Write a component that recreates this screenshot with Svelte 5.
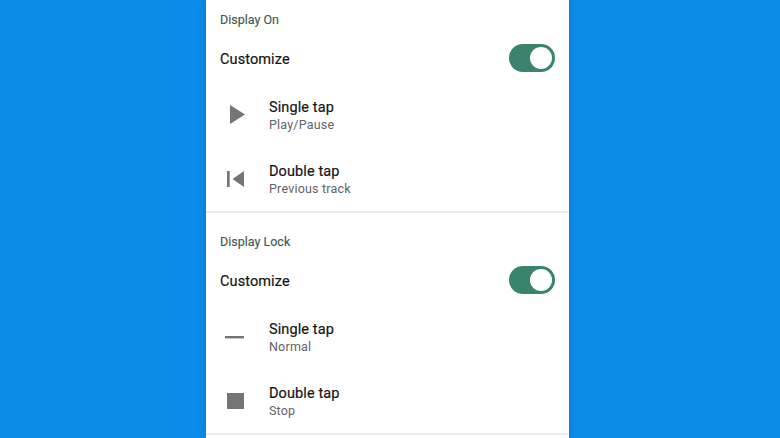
<script>
	const sections = [
		{
			title: 'Display On',
			rows: [
				{ icon: 'play', label: 'Single tap', value: 'Play/Pause' },
				{ icon: 'prev', label: 'Double tap', value: 'Previous track' }
			]
		},
		{
			title: 'Display Lock',
			rows: [
				{ icon: 'dash', label: 'Single tap', value: 'Normal' },
				{ icon: 'stop', label: 'Double tap', value: 'Stop' }
			]
		}
	];
</script>

<div class="page">
	<div class="panel">
		{#each sections as section}
			<section class="section">
				<h2 class="section-title">{section.title}</h2>

				<div class="customize">
					<span class="customize-label">Customize</span>
					<span class="toggle"><span class="thumb"></span></span>
				</div>

				<div class="rows">
					{#each section.rows as row}
						<div class="row">
							<svg class="icon" width="24" height="24" viewBox="0 0 24 24" fill="#757575">
								{#if row.icon === 'play'}
									<path d="M7 2 L22 11.5 L7 21 Z" />
								{:else if row.icon === 'prev'}
									<path d="M4 4 H6.7 V20 H4 Z M21 4 V20 L9.5 12 Z" />
								{:else if row.icon === 'dash'}
									<path d="M2 11 H21 V13.4 H2 Z" />
								{:else}
									<path d="M4 4 H21 V20 H4 Z" />
								{/if}
							</svg>
							<div class="row-text">
								<div class="row-label">{row.label}</div>
								<div class="row-value">{row.value}</div>
							</div>
						</div>
					{/each}
				</div>
			</section>
		{/each}
	</div>
</div>

<style>
	:global(body) {
		margin: 0;
		background: #0d8bea;
	}

	.page {
		height: 438px;
		overflow: hidden;
		display: flex;
		padding-left: 206px;
		font-family: Roboto, "Liberation Sans", sans-serif;
	}

	.panel {
		width: 363px;
		background: #fff;
		box-shadow: 0 0 8px rgba(0, 0, 0, 0.15);
	}

	.section {
		height: 222px;
		box-sizing: border-box;
		padding-top: 19px;
		border-bottom: 2px solid #ececec;
	}

	.section:first-child {
		height: 213px;
		padding-top: 10px;
	}

	.section-title {
		margin: 0;
		padding: 0 14px;
		font-size: 12.5px;
		line-height: 20px;
		font-weight: 400;
		color: #3f5a52;
		-webkit-text-stroke: 0.15px #3f5a52;
	}

	.customize {
		height: 38px;
		margin-top: 10px;
		padding: 0 14px;
		display: flex;
		align-items: center;
		justify-content: space-between;
		font-size: 14.5px;
		color: #161616;
	}

	.customize-label {
		padding-top: 1px;
		letter-spacing: 0.1px;
		-webkit-text-stroke: 0.2px #161616;
	}

	.toggle {
		width: 46px;
		height: 28px;
		margin-bottom: 2px;
		border-radius: 14px;
		background: #39836f;
		display: flex;
		align-items: center;
		justify-content: flex-end;
		padding-right: 3px;
		box-sizing: border-box;
	}

	.thumb {
		width: 22px;
		height: 22px;
		border-radius: 50%;
		background: #fff;
	}

	.rows {
		margin-top: 5px;
	}

	.row {
		height: 64px;
		padding-left: 17px;
		display: flex;
		align-items: center;
		gap: 22px;
	}

	.row-label {
		font-size: 14.5px;
		line-height: 19px;
		letter-spacing: 0.1px;
		color: #161616;
		-webkit-text-stroke: 0.2px #161616;
	}

	.row-value {
		font-size: 12.5px;
		line-height: 16px;
		color: #5f6368;
		letter-spacing: 0.2px;
	}
</style>
